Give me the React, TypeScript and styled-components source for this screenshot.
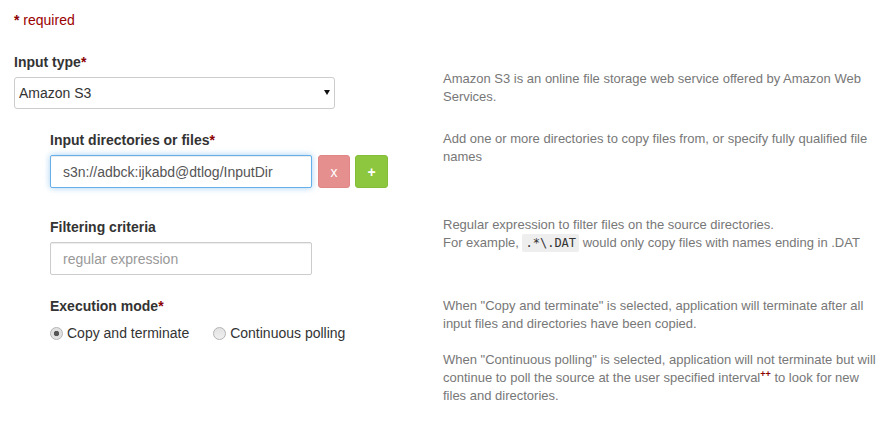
import React from "react";
import styled, { createGlobalStyle } from "styled-components";

const Global = createGlobalStyle`
  html, body { margin: 0; padding: 0; background: #fff; }
  body {
    font-family: "Liberation Sans", Arial, sans-serif;
    font-size: 14px;
    color: #333;
  }
  * { box-sizing: border-box; }
`;

const Page = styled.div`
  width: 880px;
  padding: 10px 0 0 14px;
`;

const Required = styled.div`
  line-height: 20px;
  color: #9a0000;
`;

const Star = styled.span`
  color: #8b0000;
  font-weight: bold;
`;

const Row = styled.div<{ $top: number }>`
  display: grid;
  grid-template-columns: 415px 437px;
  column-gap: 14px;
  align-items: start;
  margin-top: ${(p) => p.$top}px;
`;

const Field = styled.div<{ $indent?: boolean }>`
  display: flex;
  flex-direction: column;
  padding-left: ${(p) => (p.$indent ? 36 : 0)}px;
`;

const Label = styled.label`
  display: block;
  font-weight: bold;
  line-height: 20px;
  margin-bottom: 5px;
  color: #333;
`;

const Help = styled.div<{ $offset?: number }>`
  margin-top: ${(p) => p.$offset ?? 0}px;
  font-size: 13px;
  line-height: 18px;
  color: #777;
`;

const Para = styled.p<{ $gap?: boolean }>`
  margin: ${(p) => (p.$gap ? "18px 0 0" : "0")};
`;

const SelectWrap = styled.div`
  position: relative;
  width: 321px;
`;

const Select = styled.select`
  appearance: none;
  -webkit-appearance: none;
  width: 321px;
  height: 32px;
  border: 1px solid #ccc;
  border-radius: 3px;
  background: #fff;
  padding: 0 4px;
  font-family: "Liberation Sans", Arial, sans-serif;
  font-size: 14px;
  color: #333;
  outline: none;
`;

const Caret = styled.svg`
  position: absolute;
  right: 5px;
  top: 13px;
  pointer-events: none;
`;

const InputLine = styled.div`
  display: flex;
  align-items: center;
  gap: 5px;
`;

const TextInput = styled.input<{ $focused?: boolean }>`
  width: 262px;
  height: 33px;
  margin-right: 1px;
  border: 1px solid ${(p) => (p.$focused ? "#66afe9" : "#ccc")};
  border-radius: 2px;
  padding: 0 12px;
  font-family: "Liberation Sans", Arial, sans-serif;
  font-size: 14px;
  color: #555;
  outline: none;
  box-shadow: ${(p) =>
    p.$focused
      ? "inset 0 1px 1px rgba(0,0,0,.075), 0 0 6px rgba(102,175,233,.6)"
      : "inset 0 1px 1px rgba(0,0,0,.075)"};
  &::placeholder { color: #999; }
`;

const SmallButton = styled.button<{ $kind: "remove" | "add" }>`
  width: ${(p) => (p.$kind === "add" ? 33 : 32)}px;
  height: 33px;
  border-radius: 3px;
  border: 1px solid ${(p) => (p.$kind === "add" ? "#84bd38" : "#e08686")};
  background: ${(p) => (p.$kind === "add" ? "#8dc63f" : "#e58f8f")};
  color: #fff;
  font-family: "Liberation Sans", Arial, sans-serif;
  font-size: 14px;
  font-weight: ${(p) => (p.$kind === "add" ? "bold" : "normal")};
  padding: 0;
  cursor: pointer;
`;

const RadioGroup = styled.div`
  display: flex;
  align-items: center;
  padding-top: 2px;
  line-height: 20px;
`;

const RadioLabel = styled.label`
  display: inline-flex;
  align-items: center;
  gap: 4px;
  margin-right: 24px;
  color: #333;
  font-size: 14px;
`;

const Radio = styled.input`
  appearance: none;
  -webkit-appearance: none;
  width: 13px;
  height: 13px;
  margin: 0;
  border-radius: 50%;
  border: 1px solid #b3b3b3;
  background: linear-gradient(#e2e2e2, #f0f0f0);
  &:checked {
    background: radial-gradient(circle, #555 0 2.4px, #dcdcdc 3px, #ececec 100%);
  }
`;

const Code = styled.code`
  font-family: "DejaVu Sans Mono", "Liberation Mono", monospace;
  font-size: 12px;
  background: #eeeeee;
  color: #333;
  padding: 2px 3px;
  border-radius: 2px;
`;

const Plus = styled.sup`
  color: #8b0000;
  font-size: 9px;
  font-weight: bold;
  line-height: 0;
`;

export default function App() {
  return (
    <>
      <Global />
      <Page>
        <Required>
          <Star>*</Star> required
        </Required>

        <Row $top={22}>
          <Field>
            <Label>
              Input type<Star>*</Star>
            </Label>
            <SelectWrap>
              <Select defaultValue="s3">
                <option value="s3">Amazon S3</option>
                <option value="hdfs">HDFS</option>
              </Select>
              <Caret width="6" height="5" viewBox="0 0 6 5">
                <path d="M0 0H6L3 5Z" fill="#111" />
              </Caret>
            </SelectWrap>
          </Field>
          <Help $offset={18}>
            Amazon S3 is an online file storage web service offered by Amazon Web Services.
          </Help>
        </Row>

        <Row $top={21}>
          <Field $indent>
            <Label>
              Input directories or files<Star>*</Star>
            </Label>
            <InputLine>
              <TextInput $focused defaultValue="s3n://adbck:ijkabd@dtlog/InputDir" />
              <SmallButton $kind="remove">x</SmallButton>
              <SmallButton $kind="add">+</SmallButton>
            </InputLine>
          </Field>
          <Help>
            Add one or more directories to copy files from, or specify fully qualified file names
          </Help>
        </Row>

        <Row $top={29}>
          <Field $indent>
            <Label>Filtering criteria</Label>
            <TextInput placeholder="regular expression" />
          </Field>
          <Help $offset={-1}>
            Regular expression to filter files on the source directories.
            <br />
            For example, <Code>.*\.DAT</Code> would only copy files with names ending in .DAT
          </Help>
        </Row>

        <Row $top={21}>
          <Field $indent>
            <Label>
              Execution mode<Star>*</Star>
            </Label>
            <RadioGroup>
              <RadioLabel>
                <Radio type="radio" name="mode" defaultChecked />
                Copy and terminate
              </RadioLabel>
              <RadioLabel>
                <Radio type="radio" name="mode" />
                Continuous polling
              </RadioLabel>
            </RadioGroup>
          </Field>
          <Help $offset={1}>
            <Para>
              When "Copy and terminate" is selected, application will terminate after all input files and directories have been copied.
            </Para>
            <Para $gap>
              When "Continuous polling" is selected, application will not terminate but will continue to poll the source at the user specified interval<Plus>++</Plus> to look for new files and directories.
            </Para>
          </Help>
        </Row>
      </Page>
    </>
  );
}
